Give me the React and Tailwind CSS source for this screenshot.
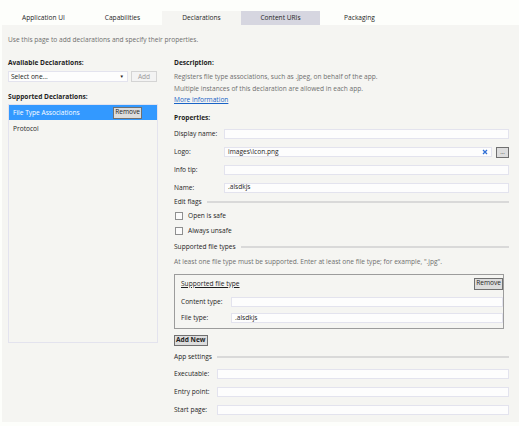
import React from 'react';

const TABS = [
  { label: 'Application UI', state: 'normal' },
  { label: 'Capabilities', state: 'normal' },
  { label: 'Declarations', state: 'active' },
  { label: 'Content URIs', state: 'hover' },
  { label: 'Packaging', state: 'normal' },
];

function Input({ value = '', className = '' }) {
  return (
    <div className={`h-[10px] border border-[#e3e3ee] bg-[#fdfdfd] px-[3px] flex items-center leading-none ${className}`}>
      {value}
    </div>
  );
}

function Field({ label, labelW, h, value, children }) {
  return (
    <div className={`flex items-center ${h}`}>
      <div className={`${labelW} shrink-0`}>{label}</div>
      {children || <Input value={value} className="flex-1" />}
    </div>
  );
}

function GroupTitle({ title, h }) {
  return (
    <div className={`flex items-center gap-[5px] ${h}`}>
      <span>{title}</span>
      <div className="flex-1 h-[2px] bg-[#d9d9d9]" />
    </div>
  );
}

function Check({ label, h }) {
  return (
    <div className={`flex items-center gap-[5px] pl-[1px] ${h}`}>
      <div className="w-[8px] h-[8px] border border-[#8e8f8f] bg-[#fbfbfb]" />
      <span>{label}</span>
    </div>
  );
}

function SmallButton({ children, className = '' }) {
  return (
    <div className={`px-[1px] border border-[#707070] bg-[#dddddd] text-[#1e1e1e] flex items-center leading-none ${className}`}>
      {children}
    </div>
  );
}

export default function App() {
  return (
    <div
      className="w-[519px] h-[426px] bg-[#fdfefb] text-[6.6px] text-[#1e1e1e] overflow-hidden"
      style={{ fontFamily: '"Open Sans", "Noto Sans", sans-serif' }}
    >
      {/* Tabs */}
      <div className="flex pl-[4px] pt-[11px] h-[25px]">
        {TABS.map(t => (
          <div
            key={t.label}
            className={`w-[79px] h-[14px] flex items-center justify-center ${
              t.state === 'active' ? 'bg-[#f5f5f2]' : t.state === 'hover' ? 'bg-[#d6d6e0]' : ''
            }`}
          >
            {t.label}
          </div>
        ))}
      </div>

      {/* Panel */}
      <div className="ml-[2px] h-[397px] bg-[#f5f5f2] pl-[6px]">
        <div className="h-[30px] flex items-center text-[#6f6f6f]">
          Use this page to add declarations and specify their properties.
        </div>

        <div className="flex">
          {/* Left column */}
          <div className="w-[150px] shrink-0">
            <div className="h-[15px] flex items-center font-bold">Available Declarations:</div>
            <div className="flex items-center gap-[3px] h-[13px]">
              <div className="w-[120px] h-[11px] border border-[#e3e3ee] bg-[#fdfdfd] flex items-center justify-between pl-[2px] pr-[3px]">
                <span>Select one...</span>
                <span className="text-[4.5px]">▼</span>
              </div>
              <div className="w-[26px] h-[11px] border border-[#d4d4d4] bg-[#f3f3f3] text-[#9a9a9a] flex items-center justify-center">
                Add
              </div>
            </div>
            <div className="h-[14px] mt-[7px] flex items-center font-bold">Supported Declarations:</div>
            <div className="w-[150px] h-[239px] border border-[#e3e3ee] bg-[#f5f5f2]">
              <div className="h-[15px] bg-[#3399ff] text-white flex items-center justify-between pl-[4px] pr-[15px]">
                <span>File Type Associations</span>
                <SmallButton className="h-[12px]">Remove</SmallButton>
              </div>
              <div className="h-[17px] flex items-center pl-[4px]">Protocol</div>
            </div>
          </div>

          {/* Right column */}
          <div className="ml-[16px] w-[335px]">
            <div className="h-[15px] flex items-center font-bold">Description:</div>
            <div className="h-[13px] flex items-center text-[#6f6f6f]">
              Registers file type associations, such as .jpeg, on behalf of the app.
            </div>
            <div className="h-[11px] flex items-center text-[#6f6f6f]">
              Multiple instances of this declaration are allowed in each app.
            </div>
            <div className="h-[11px] flex items-center">
              <span className="text-[#1a63c6] underline">More information</span>
            </div>
            <div className="h-[15px] mt-[5px] flex items-center font-bold">Properties:</div>

            <Field label="Display name:" labelW="w-[50px]" h="h-[18px]" />
            <Field label="Logo:" labelW="w-[50px]" h="h-[18px]">
              <div className="flex-1 flex items-center gap-[4px]">
                <Input
                  className="flex-1 justify-between"
                  value={
                    <>
                      <span>images\Icon.png</span>
                      <svg width="6" height="6" viewBox="0 0 6 6">
                        <path d="M1 1L5 5M5 1L1 5" stroke="#2f6fd6" strokeWidth="1.3" />
                      </svg>
                    </>
                  }
                />
                <div className="w-[13px] h-[11px] border border-[#707070] bg-[#dddddd] flex items-end justify-center leading-none text-[6px] pb-[2px]">
                  ...
                </div>
              </div>
            </Field>
            <Field label="Info tip:" labelW="w-[50px]" h="h-[18px]" />
            <Field label="Name:" labelW="w-[50px]" h="h-[17px]" value=".alsdkjs" />

            <GroupTitle title="Edit flags" h="h-[11px]" />
            <Check label="Open is safe" h="h-[17px]" />
            <Check label="Always unsafe" h="h-[14px]" />

            <GroupTitle title="Supported file types" h="h-[17px]" />
            <div className="h-[13px] flex items-center text-[#6f6f6f]">
              At least one file type must be supported. Enter at least one file type; for example, ".jpg".
            </div>

            <div className="w-[330px] mt-[6px] border border-[#9c9c9c] pl-[6px] pb-[3px]">
              <div className="flex items-center justify-between h-[17px]">
                <span className="underline">Supported file type</span>
                <SmallButton className="h-[12px]">Remove</SmallButton>
              </div>
              <Field label="Content type:" labelW="w-[50px]" h="h-[19px]" />
              <Field label="File type:" labelW="w-[50px]" h="h-[14px]" value=".alsdkjs" />
            </div>

            <div className="mt-[6px] flex">
              <SmallButton className="h-[11px] font-bold">Add New</SmallButton>
            </div>

            <div className="mt-[3px]">
              <GroupTitle title="App settings" h="h-[16px]" />
            </div>
            <Field label="Executable:" labelW="w-[43px]" h="h-[18px]" />
            <Field label="Entry point:" labelW="w-[43px]" h="h-[18px]" />
            <Field label="Start page:" labelW="w-[43px]" h="h-[17px]" />
          </div>
        </div>
      </div>
    </div>
  );
}
